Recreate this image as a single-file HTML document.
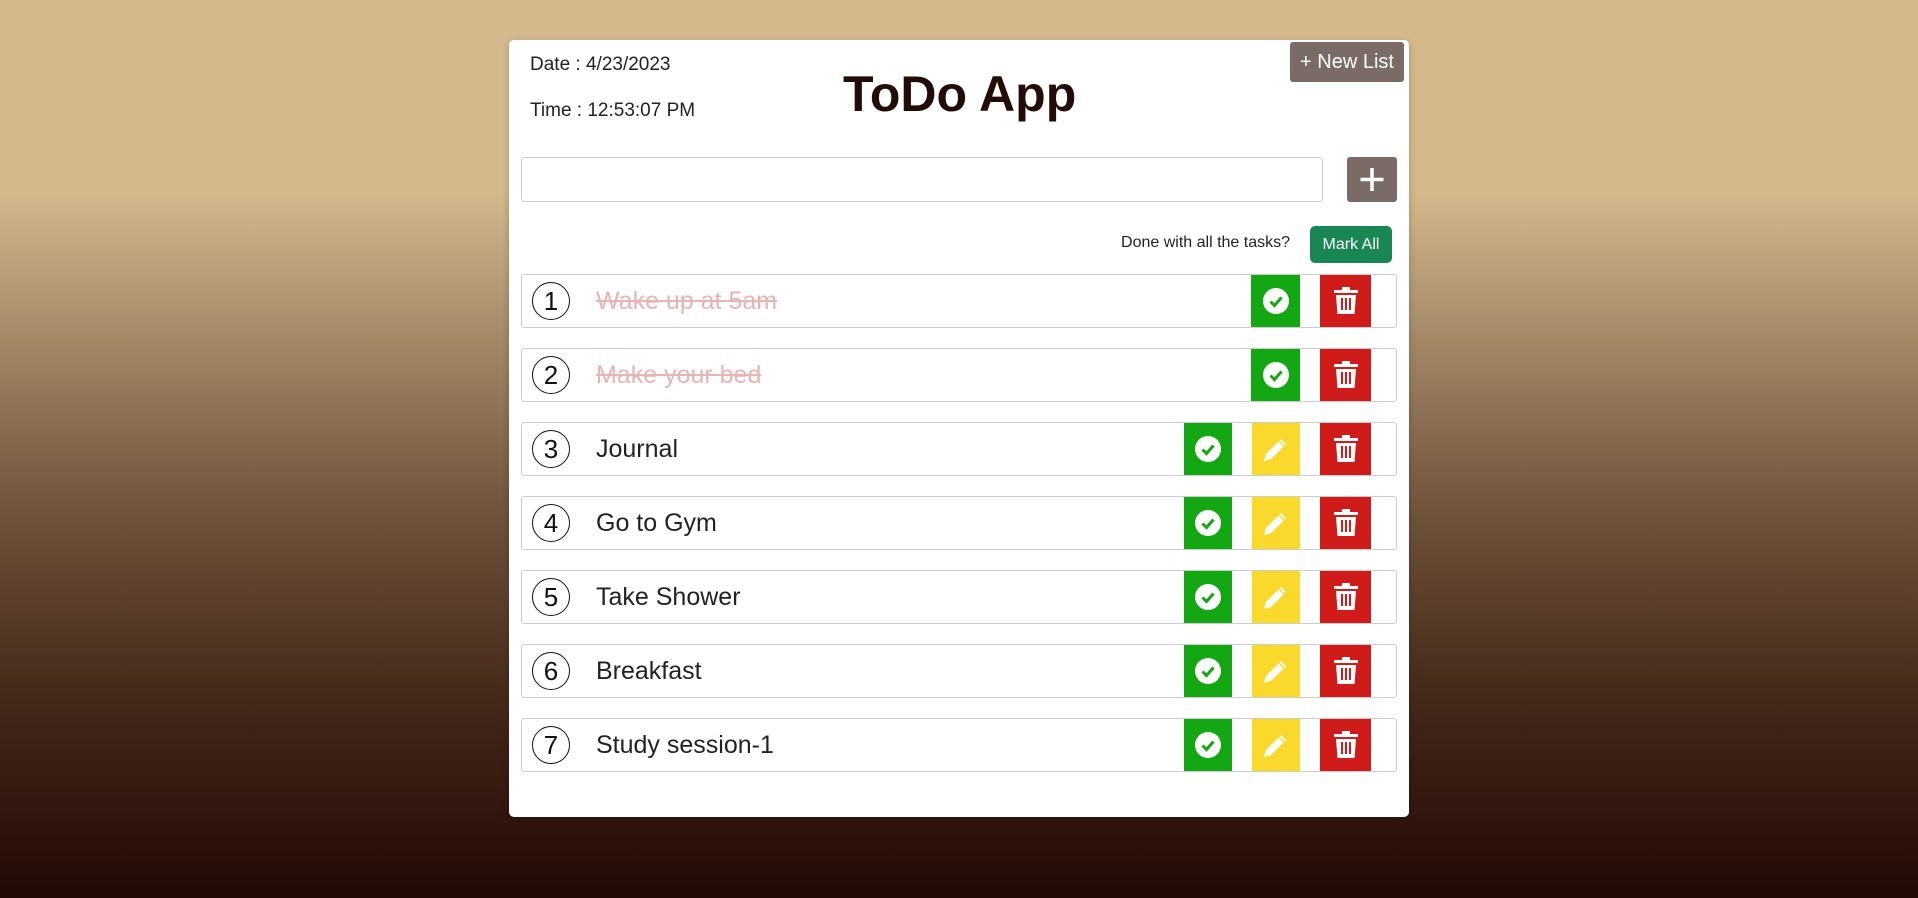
<!DOCTYPE html>
<html><head><meta charset="utf-8"><style>
*{box-sizing:border-box;margin:0;padding:0}
body{width:1918px;height:898px;overflow:hidden;font-family:"Liberation Sans",Arial,sans-serif;
background:linear-gradient(#d4b98d 0px,#d4b98d 190px,#a38866 340px,#6e5139 520px,#43291a 700px,#230904 898px);position:relative}
.card{position:absolute;left:509px;top:40px;width:900px;height:777px;background:#fff;border-radius:5px;box-shadow:0 2px 8px rgba(0,0,0,.2)}
.abs{position:absolute}
.date{left:21px;top:14px;font-size:19px;color:#222}
.time{left:21px;top:60px;font-size:19px;color:#222}
h1{position:absolute;left:334px;top:25px;font-size:50px;font-weight:bold;color:#230c05;letter-spacing:0}
.nl{left:781px;top:2px;width:114px;height:40px;background:#7b6b67;color:#fff;font-size:20px;line-height:40px;text-align:center;border-radius:3px}
.inp{left:12px;top:117px;width:802px;height:45px;border:1px solid #ccc;border-radius:3px}
.plus{left:838px;top:117px;width:50px;height:45px;background:#7b6b67;border-radius:3px}
.done{right:119px;top:194px;font-size:16px;color:#222}
.mark{left:801px;top:186px;width:82px;height:37px;background:#198754;color:#fff;font-size:16px;line-height:37px;text-align:center;border-radius:5px}
.row{position:absolute;left:12px;width:876px;height:54px;border:1px solid #ccc;border-radius:3px}
.num{position:absolute;left:10px;top:7px;width:38px;height:38px;border:1px solid #111;border-radius:50%;font-size:26px;line-height:37px;text-align:center;color:#111}
.txt{position:absolute;left:74px;top:12px;font-size:25px;color:#222}
.txt.s{color:#e5b4b4;text-decoration:line-through}
.b{position:absolute;top:0;height:52px}
.g{background:#13a813}.y{background:#f9d92b}.r{background:#d01b1b}
.b svg{position:absolute;left:50%;top:50%;transform:translate(-50%,-50%)}
</style></head><body>
<div class="card">
<div class="abs date">Date : 4/23/2023</div>
<div class="abs time">Time : 12:53:07 PM</div>
<h1>ToDo App</h1>
<div class="abs nl">+ New List</div>
<div class="abs inp"></div>
<div class="abs plus"><svg width="50" height="45"><path d="M25 11v23M13.5 22.5h23" stroke="#fff" stroke-width="3.5"/></svg></div>
<div class="abs done">Done with all the tasks?</div>
<div class="abs mark">Mark All</div>
</div>
<script>
const tasks=[["Wake up at 5am",1],["Make your bed",1],["Journal"],["Go to Gym"],["Take Shower"],["Breakfast"],["Study session-1"]];
const chk='<svg width="28" height="28" viewBox="0 0 28 28"><circle cx="14" cy="14" r="13" fill="#fff"/><path d="M8.5 14.5l4 4 7-8" stroke="#13a813" stroke-width="3" fill="none"/></svg>';
const pen='<svg width="30" height="30" viewBox="0 0 30 30"><path d="M3 27l2-7 15-15 5 5-15 15z" fill="#fff"/><path d="M18 7l5 5" stroke="#f9d92b" stroke-width="1.5"/></svg>';
const bin='<svg width="24" height="28" viewBox="0 0 24 28"><rect x="0" y="3" width="24" height="3" fill="#fff"/><rect x="8" y="0" width="8" height="3" fill="#fff"/><path d="M2 8h20l-1.5 19h-17z" fill="#fff"/><path d="M8 11v12M12 11v12M16 11v12" stroke="#d01b1b" stroke-width="2"/></svg>';
let h='';
tasks.forEach((t,i)=>{
 const top=274-40+i*74;
 h+=`<div class="row" style="top:${top}px"><div class="num">${i+1}</div><div class="txt${t[1]?' s':''}">${t[0]}</div>`;
 if(t[1]) h+=`<div class="b g" style="left:729px;width:49px">${chk}</div>`;
 else h+=`<div class="b g" style="left:662px;width:48px">${chk}</div><div class="b y" style="left:730px;width:48px">${pen}</div>`;
 h+=`<div class="b r" style="left:798px;width:51px">${bin}</div></div>`;
});
document.querySelector('.card').insertAdjacentHTML('beforeend',h);
</script>
</body></html>
